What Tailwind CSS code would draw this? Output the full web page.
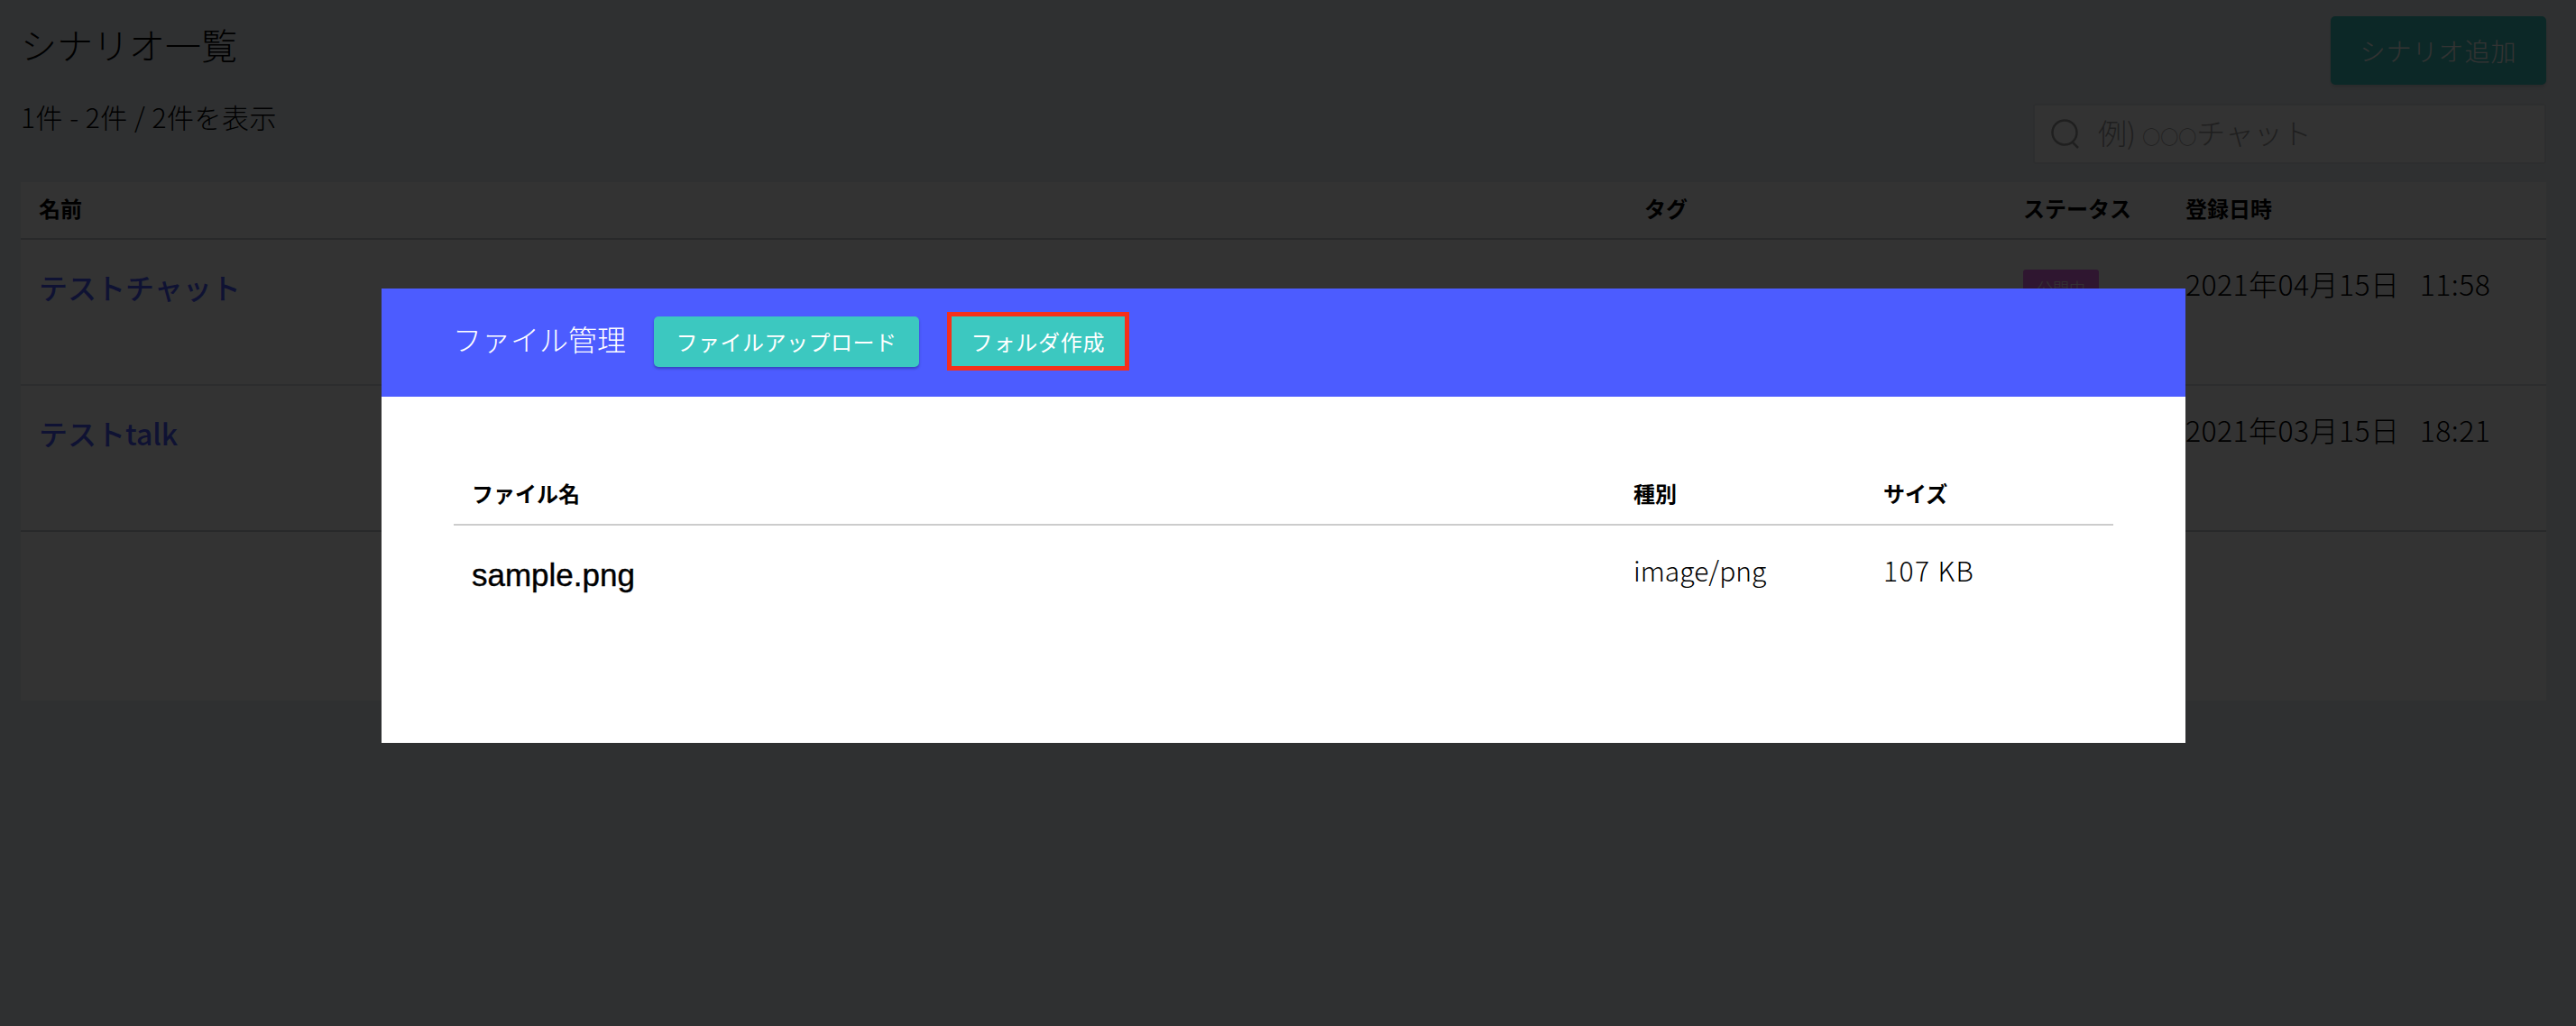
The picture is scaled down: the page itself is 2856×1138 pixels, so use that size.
<!DOCTYPE html>
<html lang="ja">
<head>
<meta charset="utf-8">
<title>シナリオ一覧</title>
<script src="https://cdn.jsdelivr.net/npm/@tailwindcss/browser@4"></script>
</head>
<body class="font-['Noto_Sans_CJK_JP','Noto_Sans',sans-serif]">
<div class="relative w-[2856px] h-[1138px] overflow-hidden bg-[#ecf0f5] font-light text-black">
  <main class="pl-[23px] pr-[33px]">
    <div class="flex justify-between items-start h-[115px] pt-[18px]">
      <div>
        <h1 class="text-[40px] leading-[68px] h-[68px] -mt-[3px] font-light">シナリオ一覧</h1>
        <p class="text-[30px] leading-[40px] mt-[26px] tracking-[0.5px]">1件 - 2件 / 2件を表示</p>
      </div>
      <button class="w-[239px] h-[76px] rounded-[5px] bg-[#3cc8c0] text-white text-[28px] tracking-[1px] shadow-md">シナリオ追加</button>
    </div>
    <div class="flex justify-end h-[87px]">
      <div class="w-[569px] h-[67px] bg-white border-2 border-[#dfe3e8] rounded-[3px] flex items-center pl-[17px] gap-[19px]">
        <svg class="w-[34px] h-[34px] text-[#9a9a9a]" viewBox="0 0 34 34" fill="none" stroke="currentColor" stroke-width="2.5"><circle cx="16" cy="15" r="13.5"/><path d="M24 25l7 7"/></svg>
        <span class="text-[32px] text-[#9a9a9a] leading-none -mt-[5px] whitespace-pre">例) <span class="text-[20px] font-normal">○○○</span>チャット</span>
      </div>
    </div>
    <div class="w-[2800px] bg-white">
      <div class="grid grid-cols-[1800px_420px_180px_400px] h-[64px] pb-[5px] items-center border-b-2 border-[#c9cdd2] text-[24px] font-bold">
        <div class="pl-[20px]">名前</div><div>タグ</div><div>ステータス</div><div>登録日時</div>
      </div>
      <div class="grid grid-cols-[1800px_420px_180px_400px] h-[162px] items-start border-b-2 border-[#dcdfe3]">
        <div class="pl-[20px] pt-[28px] text-[32px] leading-[48px] font-medium text-[#4c5cff]">テストチャット</div>
        <div></div>
        <div class="pt-[33px]"><span class="block w-[84px] h-[40px] rounded-[3px] bg-[#e870f0] text-white text-[18px] leading-[40px] text-center">公開中</span></div>
        <div class="pt-[26px] text-[32px] leading-[44px] whitespace-pre tracking-[0.4px]">2021年04月15日   11:58</div>
      </div>
      <div class="grid grid-cols-[1800px_420px_180px_400px] h-[162px] items-start border-b-2 border-[#c9cdd2]">
        <div class="pl-[20px] pt-[28px] text-[32px] leading-[48px] font-medium text-[#4c5cff]">テストtalk</div>
        <div></div>
        <div></div>
        <div class="pt-[26px] text-[32px] leading-[44px] whitespace-pre tracking-[0.4px]">2021年03月15日   18:21</div>
      </div>
      <div class="h-[187px]"></div>
    </div>
  </main>

  <div class="absolute inset-0 bg-black/80 pl-[423px] pt-[320px]">
    <section class="w-[2000px] h-[504px] bg-white">
      <header class="h-[120px] bg-[#4c5cff] flex items-center pl-[79px] text-white">
        <h2 class="text-[32px] leading-none font-light -mt-[10px] w-[223px]">ファイル管理</h2>
        <button class="w-[294px] h-[56px] rounded-[5px] bg-[#3cc8c0] text-[24px] tracking-[0.5px] font-normal text-white shadow-[0_2px_3px_rgba(0,0,50,0.3)] -mt-[2px]">ファイルアップロード</button>
        <button class="ml-[31px] w-[202px] h-[65px] border-[5px] border-[#f5301a] bg-[#3cc8c0] text-[24px] tracking-[0.8px] font-normal text-white -mt-[3px]">フォルダ作成</button>
      </header>
      <div class="mx-[80px] mt-[80px] w-[1840px]">
        <div class="grid grid-cols-[1288px_277px_275px] h-[63px] pb-[8px] items-center border-b-2 border-[#cccccc] text-[24px] font-bold text-black">
          <div class="pl-[20px]">ファイル名</div><div class="pl-[20px]">種別</div><div class="pl-[20px]">サイズ</div>
        </div>
        <div class="grid grid-cols-[1288px_277px_275px] text-black">
          <div class="pl-[20px] pt-[33px] text-[35px] leading-[44px] font-normal font-['Liberation_Sans','Noto_Sans',sans-serif] [-webkit-text-stroke:0.4px_black]">sample.png</div>
          <div class="pl-[20px] pt-[29px] text-[30px] leading-[40px]">image/png</div>
          <div class="pl-[20px] pt-[29px] text-[30px] leading-[40px] tracking-[1.4px]">107 KB</div>
        </div>
      </div>
    </section>
  </div>
</div>
</body>
</html>
